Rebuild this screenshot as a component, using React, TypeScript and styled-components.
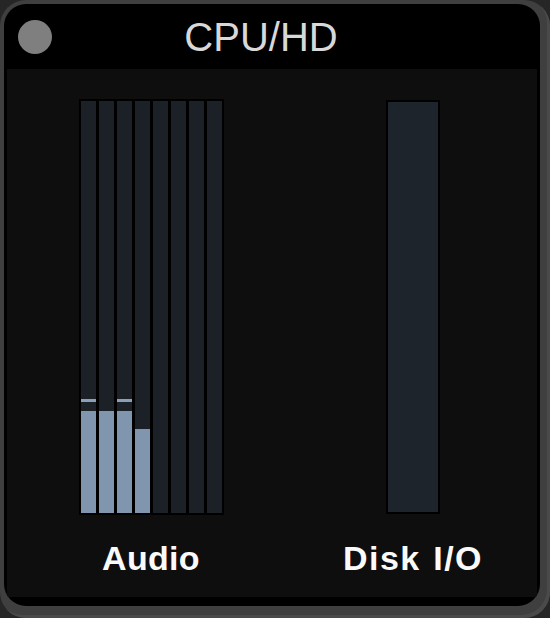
import React from "react";
import styled, { createGlobalStyle } from "styled-components";

const GlobalStyle = createGlobalStyle`
  html, body {
    margin: 0;
    padding: 0;
    background: #262626;
  }
  body {
    font-family: "Liberation Sans", Arial, sans-serif;
  }
`;

const Frame = styled.div`
  width: 550px;
  height: 618px;
  box-sizing: border-box;
  padding: 4px 10px 12px 4px;
  background: #3f3f3f;
  border-radius: 26px;
  box-shadow: inset -3px -3px 0 #4a4a4a;
`;

const Window = styled.div`
  height: 100%;
  display: flex;
  flex-direction: column;
  background: #000;
  border-radius: 22px;
  overflow: hidden;
`;

const TitleBar = styled.div`
  height: 65px;
  display: flex;
  align-items: center;
  padding-left: 14px;
`;

const Dot = styled.div`
  width: 34px;
  height: 34px;
  border-radius: 50%;
  background: #7f7f7f;
`;

const Title = styled.div`
  flex: 1;
  margin-right: 70px;
  text-align: center;
  font-size: 40px;
  line-height: 40px;
  color: #d8d8d8;
`;

const Content = styled.div`
  flex: 1;
  margin: 0 3px 9px 3px;
  background: #0e0e0e;
  display: grid;
  grid-template-columns: 210px 210px;
  column-gap: 52px;
  padding: 30px 0 0 39px;
  align-content: start;
`;

const Column = styled.div`
  display: flex;
  flex-direction: column;
  align-items: center;
`;

const MeterBox = styled.div`
  height: 416px;
  box-sizing: border-box;
  border: 2px solid #000;
  background: #000;
  display: flex;
  gap: 3px;
`;

const Bar = styled.div`
  position: relative;
  width: 15px;
  height: 100%;
  background: #1c2127;
`;

const Fill = styled.div`
  position: absolute;
  left: 0;
  right: 0;
  bottom: 0;
  background: #7f96ae;
`;

const Peak = styled.div`
  position: absolute;
  left: 0;
  right: 0;
  height: 3px;
  background: #8aa0b8;
`;

const DiskBox = styled.div`
  width: 54px;
  height: 414px;
  margin-top: 1px;
  margin-bottom: 1px;
  box-sizing: border-box;
  border: 2px solid #000;
  background: #1e242b;
`;

const Label = styled.div<{ $tracking?: number }>`
  margin-top: 26px;
  font-size: 34px;
  line-height: 34px;
  font-weight: 700;
  color: #fafafa;
  white-space: nowrap;
  word-spacing: 2px;
  letter-spacing: ${(p) => p.$tracking ?? 0.3}px;
`;

const channels = [
  { level: 102, peak: 111 },
  { level: 102, peak: 0 },
  { level: 102, peak: 111 },
  { level: 84, peak: 0 },
  { level: 0, peak: 0 },
  { level: 0, peak: 0 },
  { level: 0, peak: 0 },
  { level: 0, peak: 0 },
];

export default function App() {
  return (
    <>
      <GlobalStyle />
      <Frame>
        <Window>
          <TitleBar>
            <Dot />
            <Title>CPU/HD</Title>
          </TitleBar>
          <Content>
            <Column>
              <MeterBox>
                {channels.map((c, i) => (
                  <Bar key={i}>
                    {c.level > 0 && <Fill style={{ height: c.level }} />}
                    {c.peak > 0 && <Peak style={{ bottom: c.peak }} />}
                  </Bar>
                ))}
              </MeterBox>
              <Label>Audio</Label>
            </Column>
            <Column>
              <DiskBox />
              <Label $tracking={1.4}>Disk I/O</Label>
            </Column>
          </Content>
        </Window>
      </Frame>
    </>
  );
}
